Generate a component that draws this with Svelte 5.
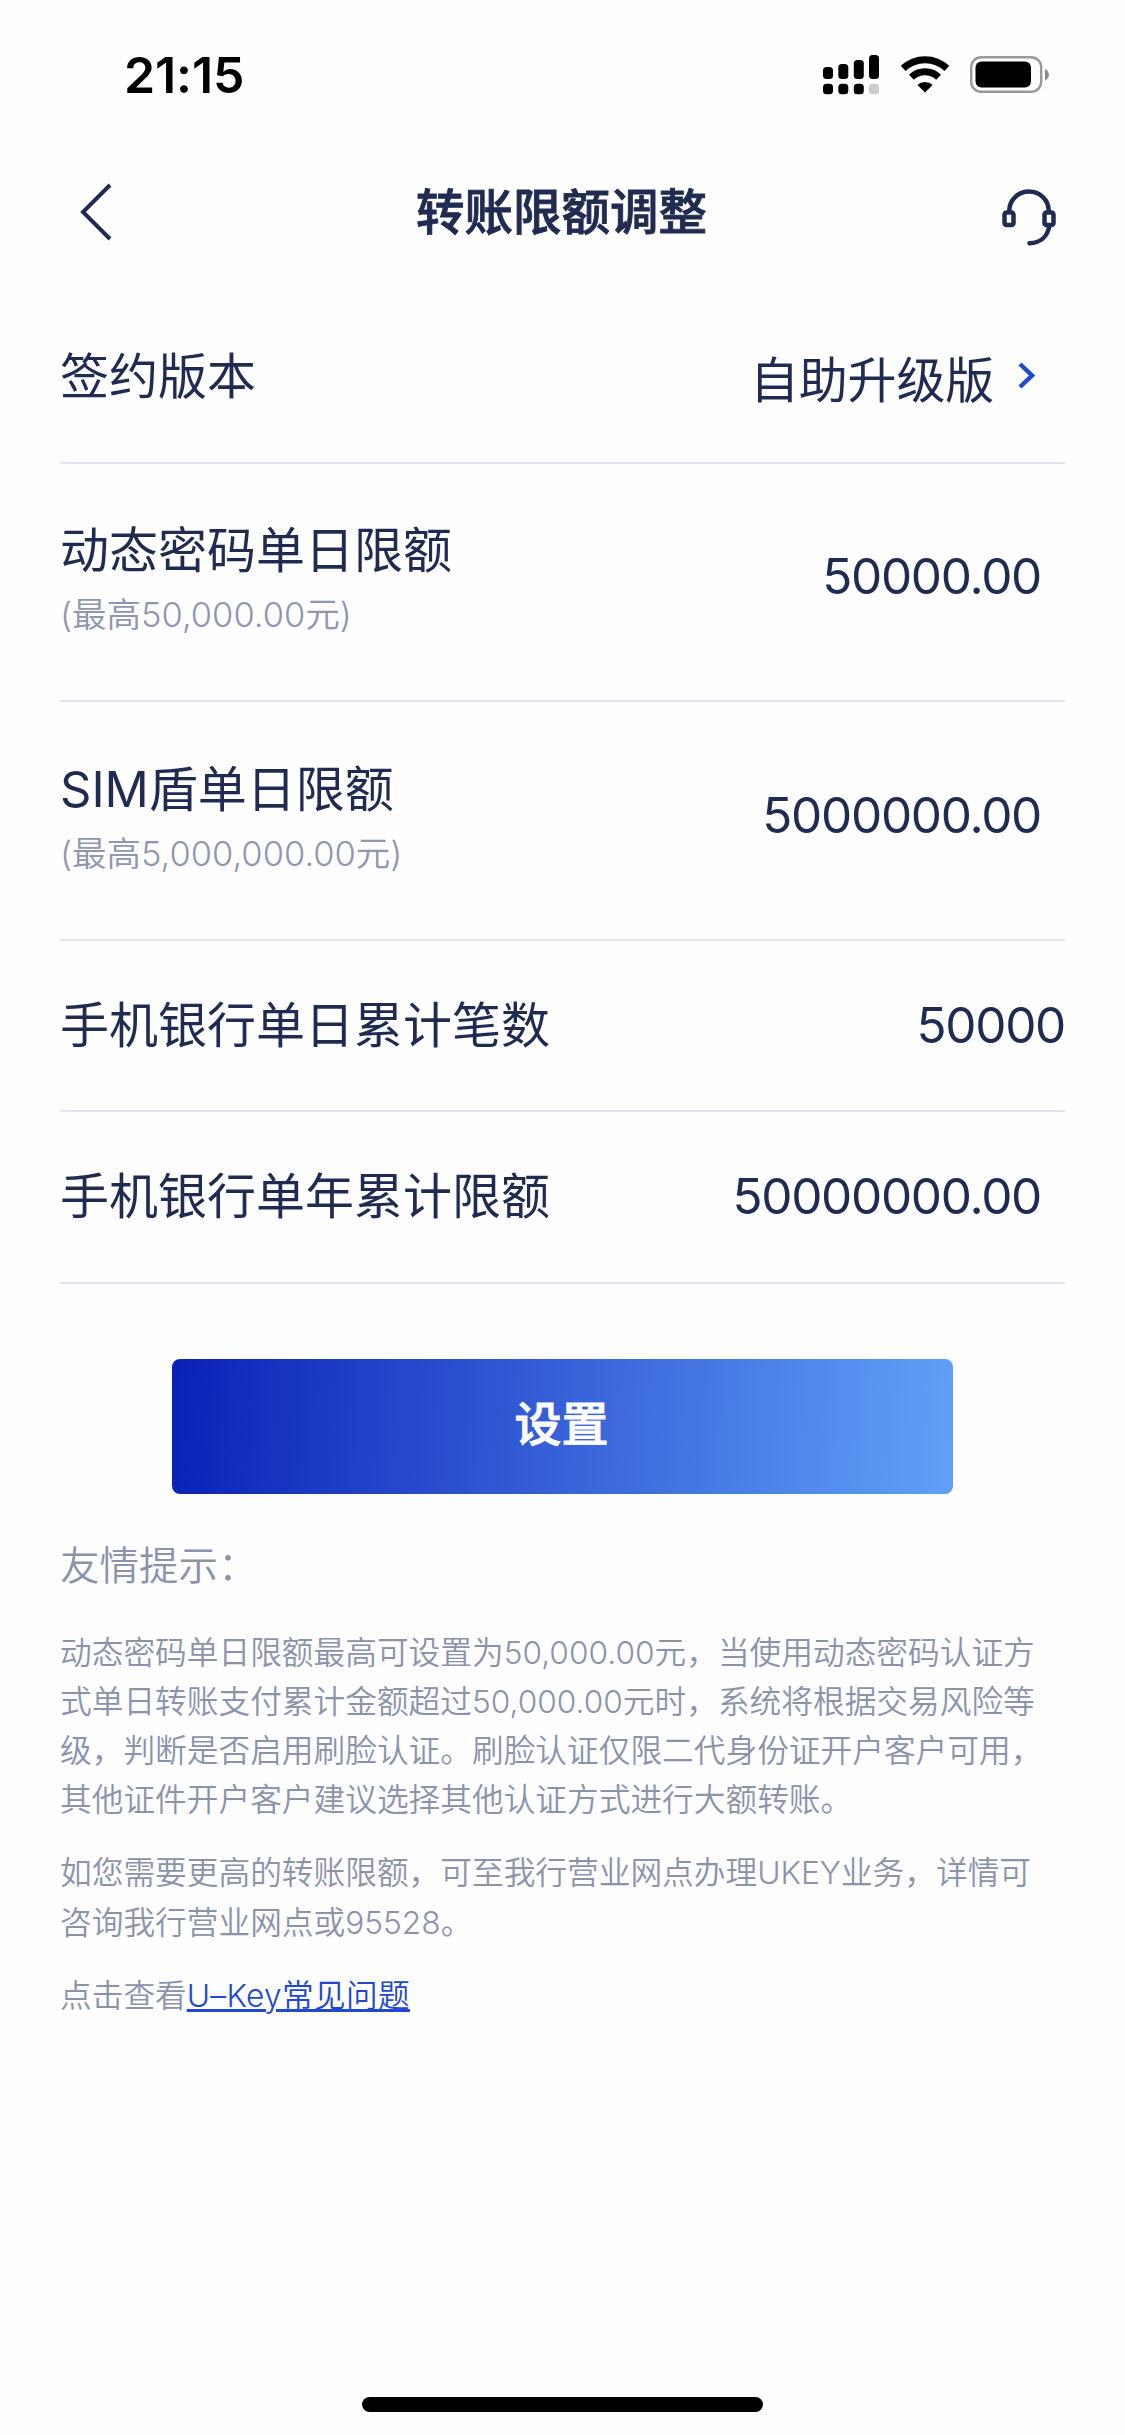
<script>
	let rows = $state([
		{ label: "签约版本", value: "自助升级版", arrow: true, inset: true },
		{ label: "动态密码单日限额", hint: "(最高50,000.00元)", value: "50000.00", inset: true },
		{ label: "SIM盾单日限额", hint: "(最高5,000,000.00元)", value: "5000000.00", inset: true },
		{ label: "手机银行单日累计笔数", value: "50000" },
		{ label: "手机银行单年累计限额", value: "50000000.00", inset: true }
	]);
</script>

<div class="page">
	<div class="status">
		<span class="time">21:15</span>
		<div class="status-icons">
			<svg width="56" height="40" viewBox="0 0 56 40">
				<rect x="0" y="12" width="10" height="12" rx="3.5" />
				<rect x="15.3" y="9" width="10" height="15" rx="3.5" />
				<rect x="30.8" y="5" width="10" height="19" rx="3.5" />
				<rect x="46" y="0" width="10" height="24" rx="3.5" />
				<rect x="0" y="28.7" width="10" height="10.5" rx="3.5" />
				<rect x="15.3" y="28.7" width="10" height="10.5" rx="3.5" />
				<rect x="30.8" y="28.7" width="10" height="10.5" rx="3.5" />
				<rect x="46" y="28.7" width="10" height="10.5" rx="3.5" fill="#ccc" />
			</svg>
			<svg class="wifi" width="50" height="38" viewBox="0 0 50 38">
				<path d="M3.2 12.4A31.5 31.5 0 0 1 46.8 12.4" fill="none" stroke="#000" stroke-width="7" />
				<path d="M11.4 21.2A19.6 19.6 0 0 1 38.6 21.2" fill="none" stroke="#000" stroke-width="7" />
				<path d="M25 36.6L17.4 29A11 11 0 0 1 32.6 29Z" />
			</svg>
			<svg class="battery" width="80" height="38" viewBox="0 0 80 38">
				<rect x="1.2" y="1.2" width="70" height="34.6" rx="10" fill="none" stroke="#999" stroke-width="2.4" />
				<rect x="5.5" y="5.5" width="55.5" height="26" rx="6" />
				<path d="M75 13c5.2 2 5.2 9.5 0 11.5z" fill="#8c8c8c" />
			</svg>
		</div>
	</div>

	<header>
		<button class="icon" aria-label="返回">
			<svg width="36" height="58" viewBox="0 0 36 58">
				<path d="M33 2L6 29L33 56" fill="none" stroke="#1f2b50" stroke-width="4" />
			</svg>
		</button>
		<h1>转账限额调整</h1>
		<button class="icon service" aria-label="客服">
			<svg width="56" height="58" viewBox="0 0 56 58" fill="none" stroke="#1f2b50" stroke-width="4.5">
				<path d="M8.3 22V21.5A19.7 19 0 0 1 47.7 21.5V22" />
				<rect x="3.5" y="23.5" width="9" height="12.5" rx="2" />
				<rect x="43.5" y="23.5" width="9" height="12.5" rx="2" />
				<path d="M48.3 37C46.5 48 39 54 28.5 54.3" stroke-linecap="round" />
			</svg>
		</button>
	</header>

	<main>
		{#each rows as row}
			<div class="row" class:tall={row.hint}>
				<div class="text">
					<span class="label">{row.label}</span>
					{#if row.hint}
						<span class="hint">{row.hint}</span>
					{/if}
				</div>
				<div class="value" class:inset={row.inset} class:cjk={row.arrow}>
					{row.value}
					{#if row.arrow}
						<svg width="20" height="30" viewBox="0 0 20 30">
							<path d="M3 3L15 14.5L3 26" fill="none" stroke="#2348d0" stroke-width="4.5" />
						</svg>
					{/if}
				</div>
			</div>
		{/each}

		<button class="submit">设置</button>

		<section class="tips">
			<h2>友情提示：</h2>
			<p>
				动态密码单日限额最高可设置为50,000.00元，当使用动态密码认证方<br />
				式单日转账支付累计金额超过50,000.00元时，系统将根据交易风险等<br />
				级，判断是否启用刷脸认证。刷脸认证仅限二代身份证开户客户可用，<br />
				其他证件开户客户建议选择其他认证方式进行大额转账。
			</p>
			<p>
				如您需要更高的转账限额，可至我行营业网点办理UKEY业务，详情可<br />
				咨询我行营业网点或95528。
			</p>
			<p>点击查看<a href="#ukey">U–Key常见问题</a></p>
		</section>
	</main>

	<div class="home-bar"></div>
</div>

<style>
	:global(body) {
		background: #fefefe;
	}

	.page {
		display: flex;
		flex-direction: column;
		width: 1125px;
		height: 2435px;
		box-sizing: border-box;
		padding-bottom: 23px;
		color: #1f2b50;
		font-family: Inter, "Noto Sans CJK SC", sans-serif;
		font-weight: 350;
		white-space: nowrap;
	}

	button {
		padding: 0;
		border: none;
		background: none;
		font-family: inherit;
		cursor: pointer;
	}

	svg {
		display: block;
	}

	.status {
		display: flex;
		justify-content: space-between;
		align-items: center;
		height: 150px;
		padding: 0 75px 0 124px;
		color: #000;
	}

	.time {
		font-size: 50px;
		font-weight: 600;
		letter-spacing: -0.1px;
	}

	.status-icons {
		display: flex;
		align-items: center;
	}

	.wifi {
		margin-left: 21px;
	}

	.battery {
		margin-left: 20px;
	}

	header {
		display: flex;
		justify-content: space-between;
		align-items: center;
		height: 124px;
		padding: 0 66px 0 77px;
	}

	.icon {
		display: flex;
		width: 58px;
	}

	.service {
		padding-top: 12px;
	}

	h1 {
		margin: 0;
		padding: 0 13px 6px 0;
		font-size: 48.5px;
		font-weight: 500;
		-webkit-text-stroke: 0.9px currentColor;
	}

	main {
		flex: 1;
		display: flex;
		flex-direction: column;
		padding: 18px 60px 0;
	}

	.row {
		display: flex;
		justify-content: space-between;
		align-items: center;
		height: 171.5px;
		box-sizing: border-box;
		border-bottom: 2px solid #e0e5f1;
	}

	.row.tall {
		height: 238.5px;
		padding-bottom: 6px;
	}

	.text {
		display: flex;
		flex-direction: column;
		padding-top: 1px;
	}

	.label {
		font-size: 49px;
		font-weight: 400;
		line-height: 72px;
	}

	.hint {
		font-size: 34.5px;
		line-height: 56px;
		color: #8f96ae;
	}

	.value {
		display: flex;
		align-items: center;
		gap: 23px;
		padding-bottom: 1px;
		font-size: 49.5px;
		font-weight: 400;
		letter-spacing: -1.3px;
	}

	.tall .value {
		padding-bottom: 5px;
	}

	.value.cjk {
		font-size: 49px;
		letter-spacing: -0.2px;
	}

	.value.inset {
		padding-right: 24px;
	}

	.value.cjk.inset {
		padding-right: 28px;
	}

	.submit {
		align-self: center;
		width: 781px;
		height: 135px;
		margin-top: 75px;
		padding: 0 2px 11px 0;
		border-radius: 8px;
		background: linear-gradient(94deg, #0a21b7, #3761d8 50%, #60a1f8);
		color: #fff;
		font-size: 47px;
		font-weight: 500;
		-webkit-text-stroke: 0.9px currentColor;
	}

	.tips {
		color: #8b93ab;
		font-size: 31.7px;
		line-height: 49.2px;
	}

	h2 {
		margin: 47px 0 37px;
		font-size: 39.5px;
		font-weight: 350;
		line-height: 50px;
	}

	p {
		margin: 0 0 24px;
	}

	a {
		color: #2348d0;
		letter-spacing: 0.3px;
	}

	.home-bar {
		align-self: center;
		width: 401px;
		height: 15px;
		border-radius: 8px;
		background: #000;
	}
</style>
